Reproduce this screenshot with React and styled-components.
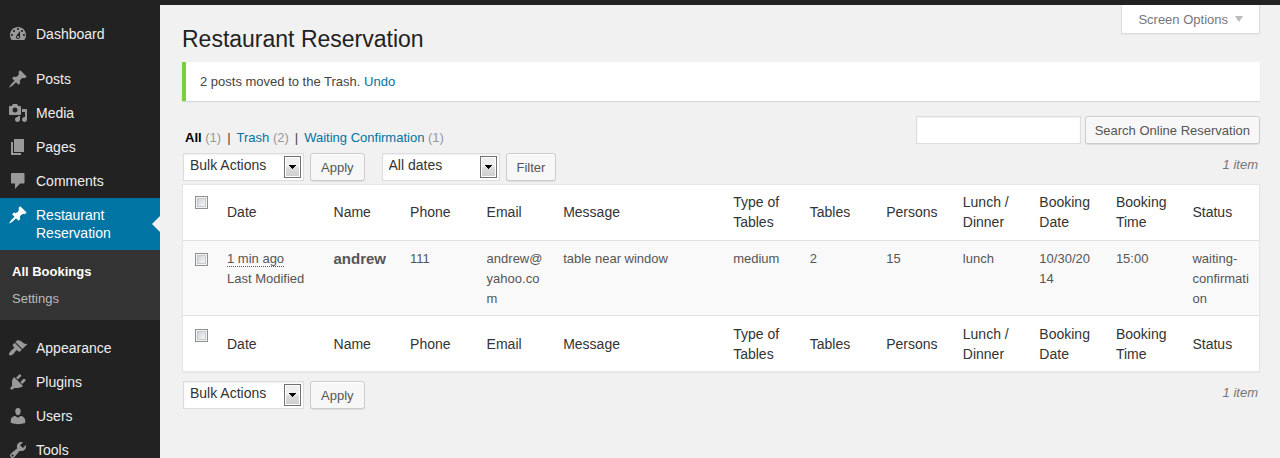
import React from "react";
import styled, { createGlobalStyle, css } from "styled-components";

const GlobalStyle = createGlobalStyle`
  *, *::before, *::after { box-sizing: border-box; }
  body {
    margin: 0;
    background: #f1f1f1;
    color: #444;
    font-family: "Liberation Sans", Arial, sans-serif;
    font-size: 13px;
    line-height: 20px;
  }
  button, input, select { font-family: inherit; margin: 0; }
  a { color: #0074a2; text-decoration: none; }
  a:hover { color: #2ea2cc; }
`;

const Page = styled.div`
  display: flex;
  flex-direction: column;
  height: 100vh;
`;

const AdminBar = styled.div`
  flex: none;
  height: 5px;
  background: #222;
`;

const Body = styled.div`
  display: flex;
  flex: 1;
  min-height: 0;
`;

const Sidebar = styled.nav`
  flex: none;
  width: 160px;
  padding-top: 12px;
  background: #222;
  overflow: hidden;
`;

const Menu = styled.ul`
  list-style: none;
  margin: 0 0 11px;
  padding: 0;
`;

const MenuLink = styled.a`
  position: relative;
  display: flex;
  gap: 8px;
  padding: 8px;
  color: #eee;
  font-size: 14px;
  line-height: 18px;

  svg {
    flex: none;
    width: 20px;
    height: 20px;
    margin: -1px 0;
    fill: #999;
  }

  ${(p) =>
    p.$current &&
    css`
      background: #0074a2;
      color: #fff;
      svg { fill: #fff; }
      &::after {
        content: "";
        position: absolute;
        top: 50%;
        right: 0;
        margin-top: -8px;
        border: 8px solid transparent;
        border-left-width: 0;
        border-right-color: #f1f1f1;
      }
    `}
`;

const SubMenu = styled.ul`
  list-style: none;
  margin: 0;
  padding: 8px 0;
  background: #333;
`;

const SubLink = styled.a`
  display: block;
  padding: 5px 12px;
  line-height: 17px;
  color: ${(p) => (p.$current ? "#fff" : "#bbb")};
  font-weight: ${(p) => (p.$current ? 700 : 400)};
`;

const Content = styled.main`
  flex: 1;
  min-width: 0;
  padding: 0 20px 0 22px;
  overflow: auto;
`;

const Header = styled.header`
  display: flex;
  justify-content: space-between;
  align-items: flex-start;
`;

const Title = styled.h1`
  margin: 0;
  padding: 20px 0 8px;
  color: #222;
  font-size: 23px;
  font-weight: 400;
  line-height: 29px;
`;

const ScreenOptions = styled.button`
  display: flex;
  align-items: center;
  gap: 7px;
  height: 29px;
  padding: 0 16px;
  border: 1px solid #ddd;
  border-top: 0;
  background: #fff;
  box-shadow: 0 1px 1px rgba(0, 0, 0, 0.04);
  color: #777;
  font-size: 13px;

  svg { width: 8px; height: 6px; fill: #bbb; }
`;

const Notice = styled.div`
  padding: 10px 14px 9px;
  border-left: 4px solid #7ad03a;
  background: #fff;
  box-shadow: 0 1px 1px rgba(0, 0, 0, 0.1);
`;

const FilterRow = styled.div`
  display: flex;
  justify-content: space-between;
  align-items: flex-start;
  margin: 15px 0 5px;
`;

const Views = styled.ul`
  display: flex;
  list-style: none;
  margin: 0;
  padding: 12px 0 0 3px;

  li + li::before { content: "|"; margin: 0 6px; }
  a[aria-current] { color: #000; font-weight: 700; }
`;

const Count = styled.span`
  color: #999;
`;

const SearchForm = styled.form`
  display: flex;
  gap: 4px;
`;

const SearchInput = styled.input`
  width: 165px;
  height: 28px;
  padding: 3px 5px;
  border: 1px solid #ddd;
  background: #fff;
  box-shadow: inset 0 1px 2px rgba(0, 0, 0, 0.07);
  font-size: 14px;
`;

const Button = styled.button`
  height: 28px;
  padding: 0 ${(p) => (p.$compact ? "9px" : "10px")};
  border: 1px solid #ccc;
  border-radius: 3px;
  background: #f7f7f7;
  box-shadow: inset 0 1px 0 #fff, 0 1px 0 rgba(0, 0, 0, 0.08);
  color: #555;
  font-size: 13px;
`;

const TableNav = styled.div`
  display: flex;
  justify-content: space-between;
  align-items: flex-start;
  padding: 0 2px 0 1px;
  margin: ${(p) => (p.$bottom ? "9px 0 0" : "0 0 3px")};
`;

const Actions = styled.div`
  display: flex;
  gap: 17px;
`;

const ActionGroup = styled.div`
  display: flex;
  gap: 6px;
`;

const ItemCount = styled.span`
  color: #777;
  font-style: italic;
  line-height: 24px;
`;

const SelectBox = styled.span`
  position: relative;
  display: block;

  svg {
    position: absolute;
    top: 3px;
    right: 3px;
    width: 17px;
    height: 22px;
    pointer-events: none;
  }
`;

const Select = styled.select`
  display: block;
  appearance: none;
  width: ${(p) => p.$width};
  height: 28px;
  padding: 0 24px 4px 6px;
  border: 1px solid #ddd;
  border-radius: 0;
  background: #fff;
  box-shadow: inset 0 1px 2px rgba(0, 0, 0, 0.07);
  color: #333;
  font-size: 14px;
`;

const Checkbox = styled.input`
  appearance: none;
  display: block;
  width: 13px;
  height: 13px;
  margin: 0;
  border: 1px solid #8e8f8f;
  background: linear-gradient(135deg, #c2c8d2, #f6f6f6 80%);
  box-shadow: inset 0 0 0 1px #f4f4f4, inset 0 0 0 2px #c4c9ce;

  &:checked { background: #555; }
`;

const Table = styled.table`
  width: 100%;
  table-layout: fixed;
  border: 1px solid #e5e5e5;
  border-collapse: separate;
  border-spacing: 0;
  background: #fff;
  box-shadow: 0 1px 1px rgba(0, 0, 0, 0.04);
`;

const Col = styled.col`
  width: ${(p) => p.$width};
`;

const HeadCell = styled.th`
  padding: ${(p) => (p.$foot ? "8px 9px 7px 10px" : "7px 9px 8px 10px")};
  border-bottom: ${(p) => (p.$foot ? "0" : "1px solid #e1e1e1")};
  color: #333;
  font-size: 14px;
  font-weight: 400;
  text-align: left;
  vertical-align: middle;
`;

const HeadCheck = styled(HeadCell)`
  padding: ${(p) => (p.$foot ? "13px" : "11px")} 0 0 12px;
  vertical-align: top;
`;

const Cell = styled.td`
  padding: 8px 9px 6px 10px;
  border-bottom: 1px solid #e1e1e1;
  background: #f9f9f9;
  color: #555;
  vertical-align: top;
  overflow-wrap: break-word;

  abbr {
    border-bottom: 1px dotted #555;
    text-decoration: none;
  }
`;

const CheckCell = styled(Cell)`
  padding: 12px 0 0 12px;
`;

const Name = styled.strong`
  font-size: 15px;
`;

const icons = {
  dashboard:
    "M3.76 16h12.48c1.1-1.37 1.76-3.11 1.76-5 0-4.42-3.58-8-8-8s-8 3.58-8 8c0 1.89.66 3.63 1.76 5zM10 4c.55 0 1 .45 1 1s-.45 1-1 1-1-.45-1-1 .45-1 1-1zM6 6c.55 0 1 .45 1 1s-.45 1-1 1-1-.45-1-1 .45-1 1-1zm8 0c.55 0 1 .45 1 1s-.45 1-1 1-1-.45-1-1 .45-1 1-1zm-5.37 5.55L12 7v6c0 1.1-.9 2-2 2s-2-.9-2-2c0-.57.24-1.08.63-1.45zM4 10c.55 0 1 .45 1 1s-.45 1-1 1-1-.45-1-1 .45-1 1-1zm12 0c.55 0 1 .45 1 1s-.45 1-1 1-1-.45-1-1 .45-1 1-1zm-5 3c0-.55-.45-1-1-1s-1 .45-1 1 .45 1 1 1 1-.45 1-1z",
  pin: "M10.44 3.02l1.82-1.82 6.36 6.35-1.83 1.82c-1.05-.68-2.48-.57-3.41.36l-.75.75c-.92.93-1.04 2.35-.35 3.41l-1.83 1.82-2.41-2.41-2.8 2.79c-.42.42-3.38 2.71-3.8 2.29s1.86-3.39 2.28-3.81l2.79-2.79L4.1 9.36l1.83-1.82c1.05.69 2.48.57 3.4-.36l.75-.75c.93-.92 1.05-2.35.36-3.41z",
  media:
    "M13 11V4c0-.55-.45-1-1-1h-1.67L9 1H5L3.67 3H2c-.55 0-1 .45-1 1v7c0 .55.45 1 1 1h10c.55 0 1-.45 1-1zM7 4.5c1.38 0 2.5 1.12 2.5 2.5S8.38 9.5 7 9.5 4.5 8.38 4.5 7 5.62 4.5 7 4.5zM14 6h5v10.5c0 1.38-1.12 2.5-2.5 2.5S14 17.88 14 16.5s1.12-2.5 2.5-2.5c.17 0 .34.02.5.05V9h-3V6zm-4 8.05V13h2v3.5c0 1.38-1.12 2.5-2.5 2.5S7 17.88 7 16.5 8.12 14 9.5 14c.17 0 .34.02.5.05z",
  pages: "M6 15V2h10v13H6zm-1 1h8v2H3V5h2v11z",
  comments:
    "M4 2h11.5c.55 0 1 .45 1 1v8.5c0 .55-.45 1-1 1H12L7 18v-5.500H4c-.55 0-1-.45-1-1V3c0-.55.45-1 1-1z",
  appearance:
    "M14.48 11.06L7.41 3.99l1.5-1.5c.5-.56 2.3-.47 3.51.32 1.21.8 1.43 1.28 2.91 2.1 1.18.64 2.45 1.26 4.45.85zm-.71.71L6.7 4.7 4.93 6.47c-.39.39-.39 1.02 0 1.41l1.06 1.06c.39.39.39 1.03 0 1.42-.6.6-1.43 1.11-2.21 1.69-.35.26-.7.53-1.01.84C1.43 14.23.4 16.08 1.4 17.07c.99 1 2.84-.03 4.18-1.36.31-.31.58-.66.85-1.02.57-.78 1.08-1.61 1.69-2.21.39-.39 1.02-.39 1.41 0l1.06 1.06c.39.39 1.02.39 1.41 0z",
  plugins:
    "M13.11 4.36L9.87 7.6 8 5.73l3.24-3.24c.35-.34 1.05-.2 1.56.32.52.51.66 1.21.31 1.55zm-8 1.77l.91-1.12 9.01 9.01-1.19.84c-.71.71-2.63 1.16-3.82 1.16H6.14L4.9 17.26c-.59.59-1.54.59-2.12 0-.59-.58-.59-1.53 0-2.12l1.24-1.24v-3.88c0-1.13.4-3.19 1.09-3.89zm7.26 3.97l3.24-3.24c.34-.35 1.04-.21 1.55.31.52.51.66 1.21.31 1.55l-3.24 3.25z",
  users:
    "M10 9.25c-2.27 0-2.73-3.44-2.73-3.44C7 4.02 7.82 2 9.97 2c2.16 0 2.98 2.02 2.71 3.81 0 0-.41 3.44-2.68 3.44zm0 2.57L12.72 10c2.39 0 4.52 2.33 4.52 4.53v2.49s-3.65 1.13-7.24 1.13c-3.65 0-7.24-1.13-7.24-1.13v-2.49c0-2.25 1.94-4.48 4.47-4.48z",
  tools:
    "M16.68 9.77c-1.34 1.34-3.3 1.67-4.95.99l-5.41 6.52c-.99.99-2.59.99-3.58 0s-.99-2.59 0-3.57l6.52-5.42c-.68-1.65-.35-3.61.99-4.95 1.28-1.28 3.12-1.62 4.72-1.06l-2.89 2.89 2.82 2.82 2.86-2.87c.53 1.58.18 3.39-1.08 4.65zM3.81 16.21c.4.39 1.04.39 1.43 0 .4-.4.4-1.04 0-1.43-.39-.4-1.03-.4-1.43 0-.39.39-.39 1.03 0 1.43z",
};

function MenuItem({ icon, label, current, children }) {
  return (
    <li>
      <MenuLink href="#" $current={current}>
        <svg viewBox="0 0 20 20" aria-hidden="true">
          <path d={icons[icon]} />
        </svg>
        <span>{label}</span>
      </MenuLink>
      {children}
    </li>
  );
}

function Dropdown({ label, option, width }) {
  return (
    <SelectBox>
      <Select aria-label={label} $width={width}>
        <option>{option}</option>
      </Select>
      <svg viewBox="0 0 17 22" aria-hidden="true">
        <defs>
          <linearGradient id="face" x1="0" y1="0" x2="0" y2="1">
            <stop offset="0.5" stopColor="#efefef" />
            <stop offset="0.5" stopColor="#dedede" />
            <stop offset="1" stopColor="#cfcfcf" />
          </linearGradient>
        </defs>
        <rect x="0.5" y="0.5" width="16" height="21" fill="#fff" stroke="#707070" />
        <rect x="2" y="2" width="13" height="18" fill="url(#face)" />
        <path d="M5 9h7v1h-1v1h-1v1H9v1H8v-1H7v-1H6v-1H5z" fill="#000" />
      </svg>
    </SelectBox>
  );
}

const columns = [
  "Date",
  "Name",
  "Phone",
  "Email",
  "Message",
  "Type of Tables",
  "Tables",
  "Persons",
  "Lunch / Dinner",
  "Booking Date",
  "Booking Time",
  "Status",
];

const booking = {
  name: "andrew",
  details: [
    "111",
    "andrew@yahoo.com",
    "table near window",
    "medium",
    "2",
    "15",
    "lunch",
    "10/30/2014",
    "15:00",
    "waiting-confirmation",
  ],
};

const columnWidths = { Date: "9.9%", Message: "15.8%" };

function HeadingRow({ foot }) {
  return (
    <tr>
      <HeadCheck $foot={foot}>
        <Checkbox type="checkbox" aria-label="Select all" />
      </HeadCheck>
      {columns.map((name) => (
        <HeadCell key={name} scope="col" $foot={foot}>
          {name}
        </HeadCell>
      ))}
    </tr>
  );
}

export default function App() {
  return (
    <Page>
      <GlobalStyle />
      <AdminBar />
      <Body>
        <Sidebar>
          <Menu>
            <MenuItem icon="dashboard" label="Dashboard" />
          </Menu>
          <Menu>
            <MenuItem icon="pin" label="Posts" />
            <MenuItem icon="media" label="Media" />
            <MenuItem icon="pages" label="Pages" />
            <MenuItem icon="comments" label="Comments" />
            <MenuItem icon="pin" label="Restaurant Reservation" current>
              <SubMenu>
                <li>
                  <SubLink href="#" $current>All Bookings</SubLink>
                </li>
                <li>
                  <SubLink href="#">Settings</SubLink>
                </li>
              </SubMenu>
            </MenuItem>
          </Menu>
          <Menu>
            <MenuItem icon="appearance" label="Appearance" />
            <MenuItem icon="plugins" label="Plugins" />
            <MenuItem icon="users" label="Users" />
            <MenuItem icon="tools" label="Tools" />
          </Menu>
        </Sidebar>
        <Content>
          <Header>
            <Title>Restaurant Reservation</Title>
            <ScreenOptions type="button">
              Screen Options
              <svg viewBox="0 0 8 6" aria-hidden="true">
                <path d="M0 0h8L4 6z" />
              </svg>
            </ScreenOptions>
          </Header>
          <Notice>
            2 posts moved to the Trash. <a href="#">Undo</a>
          </Notice>
          <FilterRow>
            <Views>
              <li>
                <a href="#" aria-current="page">All</a> <Count>(1)</Count>
              </li>
              <li>
                <a href="#">Trash</a> <Count>(2)</Count>
              </li>
              <li>
                <a href="#">Waiting Confirmation</a> <Count>(1)</Count>
              </li>
            </Views>
            <SearchForm onSubmit={(e) => e.preventDefault()}>
              <SearchInput type="search" aria-label="Search Online Reservation" />
              <Button type="submit" $compact>Search Online Reservation</Button>
            </SearchForm>
          </FilterRow>
          <TableNav>
            <Actions>
              <ActionGroup>
                <Dropdown label="Bulk action" option="Bulk Actions" width="121px" />
                <Button type="button">Apply</Button>
              </ActionGroup>
              <ActionGroup>
                <Dropdown label="Filter by date" option="All dates" width="118px" />
                <Button type="button">Filter</Button>
              </ActionGroup>
            </Actions>
            <ItemCount>1 item</ItemCount>
          </TableNav>
          <Table>
            <colgroup>
              <Col $width="34px" />
              {columns.map((name) => (
                <Col key={name} $width={columnWidths[name] || "auto"} />
              ))}
            </colgroup>
            <thead>
              <HeadingRow />
            </thead>
            <tbody>
              <tr>
                <CheckCell>
                  <Checkbox type="checkbox" aria-label={`Select ${booking.name}`} />
                </CheckCell>
                <Cell>
                  <abbr>1 min ago</abbr>
                  <br />
                  Last Modified
                </Cell>
                <Cell>
                  <Name>{booking.name}</Name>
                </Cell>
                {booking.details.map((value, i) => (
                  <Cell key={i}>{value}</Cell>
                ))}
              </tr>
            </tbody>
            <tfoot>
              <HeadingRow foot />
            </tfoot>
          </Table>
          <TableNav $bottom>
            <ActionGroup>
              <Dropdown label="Bulk action" option="Bulk Actions" width="121px" />
              <Button type="button">Apply</Button>
            </ActionGroup>
            <ItemCount>1 item</ItemCount>
          </TableNav>
        </Content>
      </Body>
    </Page>
  );
}
